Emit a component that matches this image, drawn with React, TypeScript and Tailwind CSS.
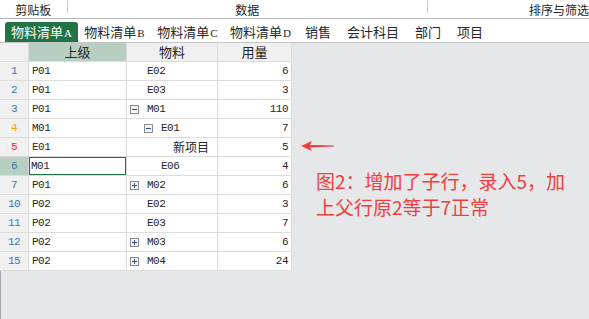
import React from "react";

type Row = {
  n: string;
  numColor: string;
  parent: string;
  item: string;
  lvl: number;
  toggle?: "plus" | "minus";
  qty: string;
  selected?: boolean;
};

const rows: Row[] = [
  { n: "1", numColor: "text-[#3a76b5]", parent: "P01", item: "E02", lvl: 0, qty: "6" },
  { n: "2", numColor: "text-[#3a76b5]", parent: "P01", item: "E03", lvl: 0, qty: "3" },
  { n: "3", numColor: "text-[#3a76b5]", parent: "P01", item: "M01", lvl: 0, toggle: "minus", qty: "110" },
  { n: "4", numColor: "text-[#f2a000]", parent: "M01", item: "E01", lvl: 1, toggle: "minus", qty: "7" },
  { n: "5", numColor: "text-[#ff1a1a]", parent: "E01", item: "新项目", lvl: 2, qty: "5" },
  { n: "6", numColor: "text-[#3a76b5]", parent: "M01", item: "E06", lvl: 1, qty: "4", selected: true },
  { n: "7", numColor: "text-[#3a76b5]", parent: "P01", item: "M02", lvl: 0, toggle: "plus", qty: "6" },
  { n: "10", numColor: "text-[#3a76b5]", parent: "P02", item: "E02", lvl: 0, qty: "3" },
  { n: "11", numColor: "text-[#3a76b5]", parent: "P02", item: "E03", lvl: 0, qty: "7" },
  { n: "12", numColor: "text-[#3a76b5]", parent: "P02", item: "M03", lvl: 0, toggle: "plus", qty: "6" },
  { n: "15", numColor: "text-[#3a76b5]", parent: "P02", item: "M04", lvl: 0, toggle: "plus", qty: "24" },
];

const letters = ["A", "B", "C", "D"];
const moreTabs = ["销售", "会计科目", "部门", "项目"];

const levelPad = ["pl-[3px]", "pl-[17px]", "pl-[29px]"];

const Toggle = ({ kind }: { kind: "plus" | "minus" }) => (
  <svg width="9" height="9" viewBox="0 0 9 9" className="shrink-0">
    <rect x="0.5" y="0.5" width="8" height="8" fill="#f3f3f3" stroke="#8c8c8c" />
    <path d="M2 4.5H7" stroke="#2b4f9f" />
    {kind === "plus" && <path d="M4.5 2V7" stroke="#2b4f9f" />}
  </svg>
);

const mono = "font-['Liberation_Mono','Noto_Sans_CJK_SC',monospace] text-[11px] tracking-[-0.5px]";

export default function App() {
  return (
    <div className="relative w-[589px] h-[319px] overflow-hidden flex flex-col bg-[#e6e7e9] font-['Noto_Sans_CJK_SC',sans-serif] text-[#262626]">
      {/* ribbon group labels */}
      <div className="h-[19px] shrink-0 bg-white border-b border-[#b5b5b5] flex text-[12px] leading-[19px] whitespace-nowrap">
        <div className="w-[68px] text-center">剪贴板</div>
        <div className="w-px h-[13px] bg-[#c9c9c9]" />
        <div className="w-[366px] text-center">数据</div>
        <div className="w-px h-[13px] bg-[#c9c9c9]" />
        <div className="pl-[101px]">排序与筛选</div>
      </div>

      {/* sheet tabs */}
      <div className="h-[24px] shrink-0 bg-white border-b border-[#c6c6c6] flex items-end pl-[5px] whitespace-nowrap">
        {letters.map((l, i) => (
          <div
            key={l}
            className={`w-[73px] h-[20px] leading-[20px] text-center text-[13px] ${
              i === 0 ? "bg-[#217346] text-white rounded-t-[3px]" : ""
            }`}
          >
            物料清单
            <span className="font-['Liberation_Serif',serif] text-[11px] ml-px">{l}</span>
          </div>
        ))}
        {moreTabs.map((t) => (
          <div key={t} className="h-[20px] leading-[20px] px-2 text-[13px]">
            {t}
          </div>
        ))}
      </div>

      {/* grid */}
      <div className="grid grid-cols-[28px_97px_90px_73px] gap-px bg-[#dcdcdc] w-fit pr-px pb-px shrink-0">
        <div className="h-[18px] bg-[#f0f0f0]" />
        <div className="h-[18px] bg-[#b7cfc1] text-center text-[13px] leading-[18px]">上级</div>
        <div className="h-[18px] bg-[#f0f0f0] text-center text-[13px] leading-[18px]">物料</div>
        <div className="h-[18px] bg-[#f0f0f0] text-center text-[13px] leading-[18px]">用量</div>

        {rows.map((r) => (
          <React.Fragment key={r.n}>
            <div
              className={`h-[18px] leading-[18px] text-center ${mono} ${r.numColor} ${
                r.selected ? "bg-[#b7cfc1]" : "bg-[#f0f0f0]"
              }`}
            >
              {r.n}
            </div>
            <div
              className={`h-[18px] bg-white ${mono} ${
                r.selected ? "border border-[#217346] leading-[16px] pl-[1px]" : "leading-[18px] pl-[3px]"
              }`}
            >
              {r.parent}
            </div>
            <div className={`h-[18px] bg-white flex items-center ${levelPad[r.lvl]}`}>
              {r.toggle ? <Toggle kind={r.toggle} /> : <div className="w-[9px] shrink-0" />}
              <span className={`ml-[8px] leading-[18px] ${r.lvl === 2 ? "text-[12px]" : mono}`}>{r.item}</span>
            </div>
            <div className={`h-[18px] bg-white leading-[18px] text-right pr-[3px] ${mono}`}>{r.qty}</div>
          </React.Fragment>
        ))}
      </div>

      <div className="flex-1 border-l border-[#a3a3a3]" />

      {/* annotation */}
      <svg className="absolute left-[301px] top-[140px]" width="34" height="12" viewBox="0 0 34 12">
        <polygon points="0,6 11,1 9,5 33,5.5 33,6.5 9,7.5 11,11" fill="#f03c3c" />
      </svg>
      <div className="absolute left-[316px] top-[168px] text-[19px] leading-[26px] text-[#f23d3d] whitespace-nowrap">
        <div>图2：增加了子行，录入5，加</div>
        <div>上父行原2等于7正常</div>
      </div>
    </div>
  );
}
